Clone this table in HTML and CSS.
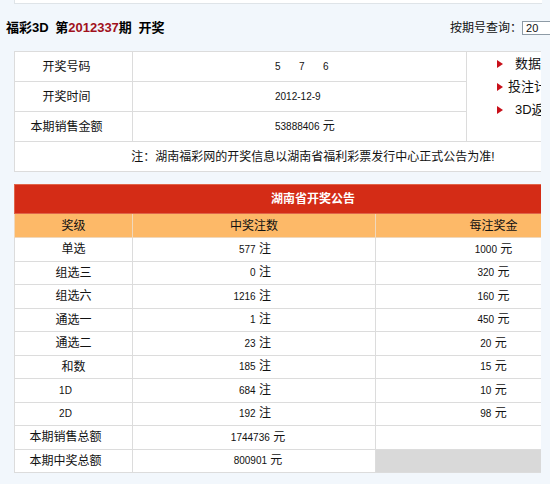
FILE: index.html
```html
<!DOCTYPE html>
<html lang="zh-CN">
<head>
<meta charset="utf-8">
<title>福彩3D 开奖</title>
<link rel="stylesheet" href="styles.css">
</head>
<body>
<div class="top"></div>
<div class="head">
  <div class="title">福彩3D 第<span class="no">2012337</span>期 开奖</div>
  <div class="query"><span>按期号查询：</span><input class="qin" type="text" value="20"></div>
</div>
<div class="wrap">
  <table class="t1">
    <colgroup><col class="w1"><col class="w2"><col class="w3"></colgroup>
    <tr>
      <td class="c1">开奖号码</td>
      <td class="c2"><span class="n ball">5</span><span class="n ball">7</span><span class="n ball">6</span></td>
      <td class="side" rowspan="3">
        <ul class="links">
          <li><span class="tri"></span><span class="sp">数据图表分析</span></li>
          <li><span class="tri"></span>投注计算器</li>
          <li><span class="tri"></span><span class="sp">3D返奖统计</span></li>
        </ul>
      </td>
    </tr>
    <tr>
      <td class="c1">开奖时间</td>
      <td class="c2"><span class="n">2012-12-9</span></td>
    </tr>
    <tr>
      <td class="c1">本期销售金额</td>
      <td class="c2"><span class="n">53888406</span> 元</td>
    </tr>
    <tr>
      <td class="note" colspan="3">注：湖南福彩网的开奖信息以湖南省福利彩票发行中心正式公告为准!</td>
    </tr>
  </table>

  <table class="t2">
    <colgroup><col class="v1"><col class="v2"><col class="v3"></colgroup>
    <tr class="cap"><td colspan="3">湖南省开奖公告</td></tr>
    <tr class="hd"><td>奖级</td><td>中奖注数</td><td>每注奖金</td></tr>
    <tr><td class="k">单选</td><td class="q"><span class="n">577</span> 注</td><td class="m"><span class="n">1000</span> 元</td></tr>
    <tr><td class="k">组选三</td><td class="q"><span class="n">0</span> 注</td><td class="m"><span class="n">320</span> 元</td></tr>
    <tr><td class="k">组选六</td><td class="q"><span class="n">1216</span> 注</td><td class="m"><span class="n">160</span> 元</td></tr>
    <tr><td class="k">通选一</td><td class="q"><span class="n">1</span> 注</td><td class="m"><span class="n">450</span> 元</td></tr>
    <tr><td class="k">通选二</td><td class="q"><span class="n">23</span> 注</td><td class="m"><span class="n">20</span> 元</td></tr>
    <tr><td class="k">和数</td><td class="q"><span class="n">185</span> 注</td><td class="m"><span class="n">15</span> 元</td></tr>
    <tr><td class="k shift"><span class="n">1D</span></td><td class="q"><span class="n">684</span> 注</td><td class="m"><span class="n">10</span> 元</td></tr>
    <tr><td class="k shift"><span class="n">2D</span></td><td class="q"><span class="n">192</span> 注</td><td class="m"><span class="n">98</span> 元</td></tr>
    <tr><td class="k shift">本期销售总额</td><td class="tot"><span class="n">1744736</span> 元</td><td class="m"></td></tr>
    <tr><td class="k shift">本期中奖总额</td><td class="tot"><span class="n">800901</span> 元</td><td class="m grey"></td></tr>
  </table>
</div>
</body>
</html>
```

FILE: styles.css
```css
html, body {
  margin: 0;
  padding: 0;
  overflow: hidden;
}
body {
  width: 550px;
  height: 484px;
  background: #f2f7fc;
  color: #111;
  font-family: "Liberation Sans", "Noto Sans CJK SC", sans-serif;
  font-size: 12px;
  line-height: 14px;
}
.top {
  margin-left: 14px;
  width: 527px;
  height: 3px;
  background: #fff;
  border-left: 1px solid #dfe4e8;
  border-bottom: 1px solid #dfe4e8;
}
.head {
  display: grid;
  grid-template-columns: 450px 200px;
  align-items: center;
  height: 47px;
}
.title {
  padding-left: 6px;
  font-size: 13px;
  font-weight: bold;
  word-spacing: 3px;
  color: #000;
}
.title .no {
  color: #a1111c;
}
.query {
  display: flex;
  align-items: center;
}
.qin {
  box-sizing: border-box;
  width: 80px;
  height: 14px;
  margin: 0;
  padding: 0 3px;
  border: 1px solid #8e9ba6;
  background: #fff;
  font-family: "Liberation Sans", sans-serif;
  font-size: 11px;
  line-height: 12px;
  color: #111;
}
.wrap {
  margin-left: 14px;
  width: 527px;
  overflow: hidden;
}
table {
  border-collapse: collapse;
  table-layout: fixed;
  width: 597px;
  background: #fff;
}
td {
  border: 1px solid #dcdcdc;
  padding: 0;
}
.n {
  font-size: 10px;
}
.w1 { width: 118px; }
.w2 { width: 334px; }
.w3 { width: 145px; }
.t1 td {
  height: 29px;
}
.c1 {
  text-align: center;
  padding-right: 14px;
}
.c2 {
  padding-left: 142px;
}
.ball {
  display: inline-block;
  width: 24px;
}
.side {
  vertical-align: top;
}
.links {
  list-style: none;
  margin: 0;
  padding: 0;
  font-size: 13px;
}
.links li {
  display: flex;
  align-items: center;
  height: 23px;
  padding-left: 30px;
  white-space: nowrap;
}
.tri {
  width: 0;
  height: 0;
  border-left: 6px solid #c8101a;
  border-top: 4px solid transparent;
  border-bottom: 4px solid transparent;
  margin-right: 5px;
}
.sp {
  margin-left: 7px;
}
.note {
  text-align: center;
}
.t2 {
  margin-top: 12px;
}
.v1 { width: 118px; }
.v2 { width: 243px; }
.v3 { width: 236px; }
.cap td {
  height: 28px;
  background: #d42c16;
  border-color: #e0654a;
  color: #fff;
  font-weight: bold;
  text-align: center;
}
.hd td {
  height: 23px;
  background: #fdb968;
  border-color: #f0d8bc;
  text-align: center;
}
.t2 tr td {
  text-align: center;
}
.t2 .k, .t2 .q, .t2 .m, .t2 .tot {
  height: 22.5px;
}
.t2 .shift {
  padding-right: 16px;
}
.t2 .q {
  text-align: right;
  padding-right: 104px;
}
.t2 .tot {
  padding-left: 8px;
}
.grey {
  background: #d9d9d9;
}
```
